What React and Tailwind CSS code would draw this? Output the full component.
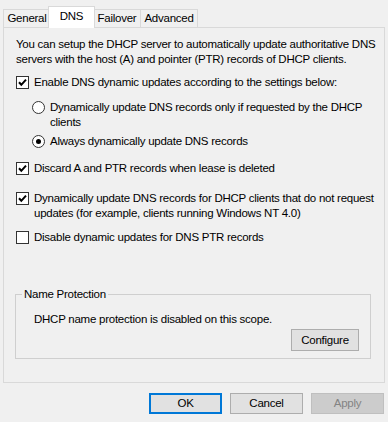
import React from 'react';

const Check = ({ checked }) => (
  <span className="flex-shrink-0 w-[13px] h-[13px] border border-[#333333] bg-white flex items-center justify-center">
    {checked && (
      <svg width="11" height="11" viewBox="0 0 11 11">
        <path d="M2 5.3 L4.3 7.8 L9 2.6" fill="none" stroke="#000" strokeWidth="2" />
      </svg>
    )}
  </span>
);

const Radio = ({ checked }) => (
  <span className="flex-shrink-0 w-[13px] h-[13px] rounded-full border border-[#333333] bg-white flex items-center justify-center">
    {checked && <span className="w-[5px] h-[5px] rounded-full bg-black" />}
  </span>
);

const Tab = ({ label, width, selected }) =>
  selected ? (
    <div
      className={`relative z-10 -mx-[2px] -mb-px h-[22px] ${width} border border-b-0 border-[#d9d9d9] bg-white flex items-start justify-center pt-[2px]`}
    >
      {label}
    </div>
  ) : (
    <div
      className={`h-[18px] ${width} border border-b-0 border-[#d9d9d9] bg-[#f0f0f0] flex items-start justify-center pt-px -mr-px`}
    >
      {label}
    </div>
  );

const Button = ({ children, variant }) => {
  if (variant === 'default') {
    return (
      <button className="w-[73px] h-[21px] border border-[#0078d7] shadow-[inset_0_0_0_1px_#0078d7] bg-[#e1e1e1] text-black">
        {children}
      </button>
    );
  }
  if (variant === 'disabled') {
    return (
      <button className="w-[73px] h-[21px] border border-[#bfbfbf] bg-[#cccccc] text-[#838383]">
        {children}
      </button>
    );
  }
  return (
    <button className="w-[73px] h-[21px] border border-[#adadad] bg-[#e1e1e1] text-black">
      {children}
    </button>
  );
};

export default function App() {
  return (
    <div className="w-[388px] h-[422px] bg-[#f0f0f0] text-black text-[11.5px] tracking-[-0.25px] leading-[15px] whitespace-nowrap font-['Liberation_Sans',Arial,sans-serif] overflow-hidden">
      {/* Tabs */}
      <div className="flex items-end h-[27px] pl-[3px]">
        <Tab label="General" width="w-[48px]" />
        <Tab label="DNS" width="w-[47px]" selected />
        <Tab label="Failover" width="w-[48px]" />
        <Tab label="Advanced" width="w-[58px]" />
      </div>

      {/* Tab page */}
      <div className="mx-[3px] h-[356px] border border-[#d9d9d9] bg-[#f0f0f0] pt-[9px] pl-[12px] pr-[13px]">
        <p>
          You can setup the DHCP server to automatically update authoritative DNS
          <br />
          servers with the host (A) and pointer (PTR) records of DHCP clients.
        </p>

        <div className="mt-[8px] flex items-center gap-[5px]">
          <Check checked />
          <span>Enable DNS dynamic updates according to the settings below:</span>
        </div>

        <div className="mt-[10px] pl-[16px] flex items-start gap-[5px]">
          <span className="mt-px">
            <Radio />
          </span>
          <span>
            Dynamically update DNS records only if requested by the DHCP
            <br />
            clients
          </span>
        </div>

        <div className="mt-[4px] pl-[16px] flex items-center gap-[5px]">
          <Radio checked />
          <span>Always dynamically update DNS records</span>
        </div>

        <div className="mt-[12px] flex items-center gap-[5px]">
          <Check checked />
          <span>Discard A and PTR records when lease is deleted</span>
        </div>

        <div className="mt-[15px] flex items-start gap-[5px]">
          <span className="mt-px">
            <Check checked />
          </span>
          <span>
            Dynamically update DNS records for DHCP clients that do not request
            <br />
            updates (for example, clients running Windows NT 4.0)
          </span>
        </div>

        <div className="mt-[9px] flex items-center gap-[5px]">
          <Check />
          <span>Disable dynamic updates for DNS PTR records</span>
        </div>

        <fieldset className="mt-[42px] -ml-[1px] border border-[#cfcfcf] pl-[18px] pr-[11px] pb-[7px]">
          <legend className="-ml-[12px] px-[2px]">Name Protection</legend>
          <p className="mt-[10px]">DHCP name protection is disabled on this scope.</p>
          <div className="flex justify-end mt-[2px]">
            <button className="w-[68px] h-[22px] border border-[#adadad] bg-[#e1e1e1]">Configure</button>
          </div>
        </fieldset>
      </div>

      {/* Dialog buttons */}
      <div className="flex justify-end gap-[8px] pr-[4px] mt-[10px]">
        <Button variant="default">OK</Button>
        <Button>Cancel</Button>
        <Button variant="disabled">Apply</Button>
      </div>
    </div>
  );
}
